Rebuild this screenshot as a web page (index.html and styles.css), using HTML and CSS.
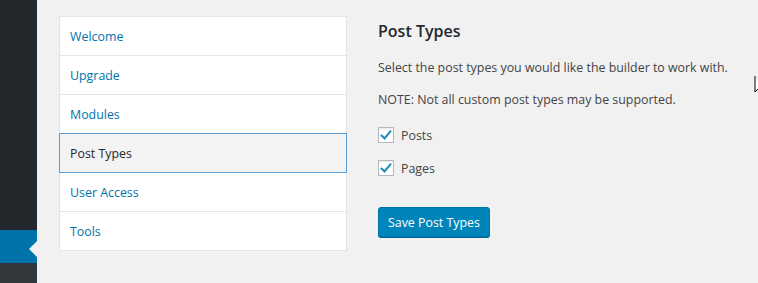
FILE: index.html
```html
<!DOCTYPE html>
<html lang="en">
<head>
    <meta charset="UTF-8">
    <title>Post Types Settings</title>
    <link rel="stylesheet" href="styles.css">
</head>
<body>
    <div class="adminmenu">
        <div class="menu-top"></div>
        <div class="menu-current"><span class="menu-arrow"></span></div>
        <div class="menu-sub"></div>
    </div>

    <div class="wrap">
        <ul class="settings-nav">
            <li><a href="#">Welcome</a></li>
            <li><a href="#">Upgrade</a></li>
            <li><a href="#">Modules</a></li>
            <li class="active"><a href="#">Post Types</a></li>
            <li><a href="#">User Access</a></li>
            <li><a href="#">Tools</a></li>
        </ul>

        <form class="settings-form">
            <h2>Post Types</h2>
            <p>Select the post types you would like the builder to work with.</p>
            <p>NOTE: Not all custom post types may be supported.</p>

            <label class="check"><input type="checkbox" checked> Posts</label>
            <label class="check"><input type="checkbox" checked> Pages</label>

            <button type="submit" class="button-primary">Save Post Types</button>
        </form>
    </div>

    <svg class="cursor" width="8" height="20" viewBox="0 0 8 20">
        <path d="M1 1 L1 17 L5 13 L8 19" fill="#fff" stroke="#000" stroke-width="1"/>
    </svg>
</body>
</html>
```

FILE: styles.css
```css
html, body {
    margin: 0;
    height: 100%;
}
body {
    font-family: "Open Sans", Arial, sans-serif;
    font-size: 12.4px;
    color: #444;
    background-color: #f1f1f1;
    display: flex;
    overflow: hidden;
}
.adminmenu {
    width: 37px;
    flex-shrink: 0;
    display: flex;
    flex-direction: column;
}
.menu-top {
    height: 230px;
    background-color: #23282d;
}
.menu-current {
    height: 33px;
    background-color: #0073aa;
    display: flex;
    align-items: center;
    justify-content: flex-end;
}
.menu-arrow {
    width: 0;
    height: 0;
    border-top: 8px solid transparent;
    border-bottom: 8px solid transparent;
    border-right: 8px solid #f1f1f1;
    margin-top: 4px;
}
.menu-sub {
    flex: 1;
    background-color: #32373c;
}
.wrap {
    display: flex;
    align-items: flex-start;
    padding: 16px 0 0 22px;
    gap: 31px;
}
.settings-nav {
    list-style: none;
    margin: 0;
    padding: 0;
    width: 288px;
    background-color: #fff;
    border: 1px solid #e5e5e5;
    box-sizing: border-box;
}
.settings-nav li {
    border-top: 1px solid #e5e5e5;
    height: 38px;
    display: flex;
    align-items: center;
    padding: 0 10px;
}
.settings-nav li:first-child {
    border-top: none;
}
.settings-nav a {
    color: #0073aa;
    text-decoration: none;
}
.settings-nav li.active {
    background-color: #f3f3f3;
    border: 1px solid #5b9dd9;
    margin: 0 -1px;
    height: 38px;
}
.settings-nav li.active + li {
    border-top: none;
}
.settings-nav li.active a {
    color: #23282d;
}
.settings-form {
    padding-top: 4px;
}
.settings-form h2 {
    font-size: 16px;
    font-weight: 600;
    color: #23282d;
    margin: 0 0 17px;
}
.settings-form p {
    margin: 0 0 15px;
}
.check {
    display: flex;
    align-items: center;
    gap: 7px;
    height: 16px;
    margin: 19px 0 0;
}
.check + .check {
    margin-top: 17px;
}
.check input {
    appearance: none;
    width: 16px;
    height: 16px;
    margin: 0;
    border: 1px solid #b4b9be;
    border-radius: 0;
    background: #fff;
    box-shadow: inset 0 1px 2px rgba(0, 0, 0, 0.1);
    position: relative;
}
.check input:checked::after {
    content: "";
    position: absolute;
    left: 4px;
    top: 0px;
    width: 4px;
    height: 9px;
    border: solid #1e8cbe;
    border-width: 0 2.5px 2.5px 0;
    transform: rotate(40deg);
}
.button-primary {
    margin-top: 31px;
    height: 30px;
    padding: 0 9px;
    font-family: inherit;
    font-size: 12.4px;
    color: #fff;
    background-color: #0085ba;
    border: 1px solid #0073aa;
    border-radius: 3px;
    box-shadow: 0 1px 0 #006799;
    cursor: pointer;
}
.cursor {
    position: absolute;
    left: 754px;
    top: 75px;
}
```
